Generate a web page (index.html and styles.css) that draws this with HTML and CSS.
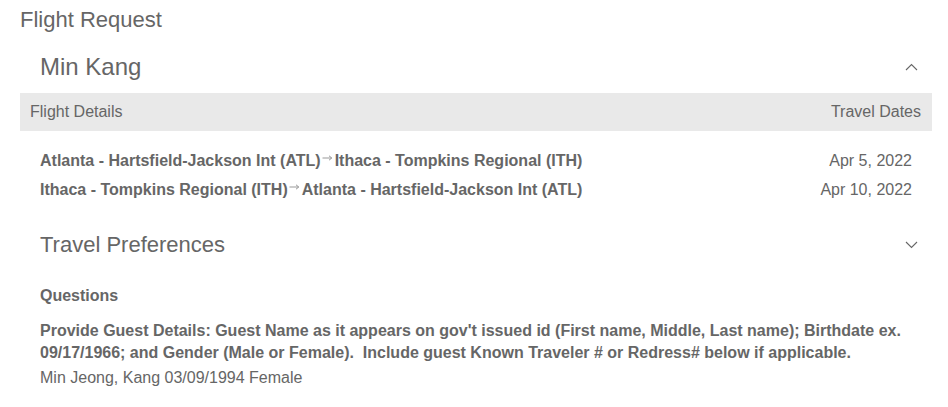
FILE: index.html
```html
<!DOCTYPE html>
<html>
<head>
<meta charset="utf-8">
<link rel="stylesheet" href="styles.css">
</head>
<body>
<div class="page">
  <h1 class="title">Flight Request</h1>
  <div class="section">
    <div class="sec-head">
      <h2 class="name">Min Kang</h2>
      <svg class="chev" width="13" height="8" viewBox="0 0 13 8"><path d="M1 7 L6.5 1.5 L12 7" fill="none" stroke="#666" stroke-width="1.1"/></svg>
    </div>
  </div>
  <div class="bar">
    <span>Flight Details</span>
    <span>Travel Dates</span>
  </div>
  <div class="flights">
    <div class="row">
      <span class="route">Atlanta - Hartsfield-Jackson Int (ATL)<svg class="arrow" width="11" height="6" viewBox="0 0 11 6"><path d="M0.5 3 H9.5 M7 0.8 L9.8 3 L7 5.2" fill="none" stroke="#999" stroke-width="1"/></svg>Ithaca - Tompkins Regional (ITH)</span>
      <span class="date">Apr 5, 2022</span>
    </div>
    <div class="row">
      <span class="route">Ithaca - Tompkins Regional (ITH)<svg class="arrow" width="11" height="6" viewBox="0 0 11 6"><path d="M0.5 3 H9.5 M7 0.8 L9.8 3 L7 5.2" fill="none" stroke="#999" stroke-width="1"/></svg>Atlanta - Hartsfield-Jackson Int (ATL)</span>
      <span class="date">Apr 10, 2022</span>
    </div>
  </div>
  <div class="section">
    <div class="sec-head prefs">
      <h2 class="name">Travel Preferences</h2>
      <svg class="chev" width="13" height="8" viewBox="0 0 13 8"><path d="M1 1 L6.5 6.5 L12 1" fill="none" stroke="#666" stroke-width="1.1"/></svg>
    </div>
    <div class="questions">
      <div class="q-title">Questions</div>
      <div class="q-text">Provide Guest Details: Guest Name as it appears on gov't issued id (First name, Middle, Last name); Birthdate ex. 09/17/1966; and Gender (Male or Female).&nbsp; Include guest Known Traveler # or Redress# below if applicable.</div>
      <div class="answer">Min Jeong, Kang 03/09/1994 Female</div>
    </div>
  </div>
</div>
</body>
</html>
```
FILE: styles.css
```css
* { box-sizing: border-box; }
html, body { margin: 0; padding: 0; background: #fff; }
body {
  font-family: Arial, "Liberation Sans", sans-serif;
  color: #666;
}
.page {
  width: 948px;
  padding: 6px 16px 0 20px;
}
.title {
  margin: 0;
  font-size: 22px;
  font-weight: normal;
  line-height: 28px;
}
.sec-head {
  display: flex;
  justify-content: space-between;
  align-items: center;
  padding: 0 14px 0 20px;
}
.section:first-of-type .sec-head {
  height: 59px;
  padding-top: 7px;
}
.name {
  margin: 0;
  font-size: 24px;
  font-weight: normal;
  line-height: 30px;
}
.bar {
  display: flex;
  justify-content: space-between;
  align-items: center;
  height: 38px;
  background: #e9e9e9;
  padding: 0 11px 0 10px;
  font-size: 16px;
}
.flights {
  padding: 15px 20px 0 20px;
}
.row {
  display: flex;
  justify-content: space-between;
  align-items: center;
  height: 29px;
  font-size: 16px;
}
.route { font-weight: bold; }
.arrow {
  vertical-align: 5px;
  margin: 0 2px 0 1px;
}
.prefs {
  height: 67px;
  padding-top: 14px;
}
.prefs .name { font-size: 22px; }
.questions {
  padding: 0 20px;
  font-size: 16px;
}
.q-title {
  font-weight: bold;
  line-height: 22px;
  margin-top: 14px;
}
.q-text {
  font-weight: bold;
  line-height: 22px;
  margin-top: 13px;
}
.answer {
  line-height: 22px;
  margin-top: 3px;
}
```
